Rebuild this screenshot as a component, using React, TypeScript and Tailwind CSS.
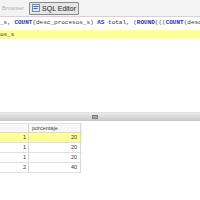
import React from 'react';

const ROWS = [
  { n: 1, p: 20 },
  { n: 1, p: 20 },
  { n: 1, p: 20 },
  { n: 2, p: 40 },
];

export default function App() {
  return (
    <div className="w-[200px] h-[200px] bg-white flex flex-col overflow-hidden font-['Liberation_Sans',sans-serif]">
      {/* Tabs */}
      <div className="h-[17px] shrink-0 bg-[#f3f3f3] border-b border-[#d4d4d4] flex items-center pl-[2px] gap-[5px]">
        <span className="text-[6px] text-[#b0b0b0]">Browser</span>
        <div className="h-[13px] px-[2px] flex items-center gap-[2px] border border-[#8a8a8a] bg-[#e6e6e6] rounded-[1px]">
          <svg width="8" height="8" viewBox="0 0 8 8">
            <rect x="0.5" y="0.5" width="7" height="7" fill="#dfe9f3" stroke="#6d8fb3" />
            <rect x="1.5" y="2" width="5" height="1" fill="#3b6ea5" />
            <rect x="1.5" y="4" width="4" height="1" fill="#3b6ea5" />
          </svg>
          <span className="text-[7px] text-[#222] leading-none">SQL Editor</span>
        </div>
      </div>

      {/* Editor */}
      <div className="h-[95px] shrink-0 overflow-hidden font-['Liberation_Mono',monospace] text-[6px] leading-[10px] text-[#333] whitespace-nowrap">
        <div className="h-[10px] mt-[1px] overflow-hidden">
          _s, <span className="text-[#3232b4] font-bold">COUNT</span>(desc_procesos_s) <span className="text-[#3232b4] font-bold">AS</span> total, (<span className="text-[#3232b4] font-bold">ROUND</span>(((<span className="text-[#3232b4] font-bold">COUNT</span>(desc
        </div>
        <div className="h-[9px] mt-[2px] bg-[#ffff99]">os_s</div>
      </div>

      {/* Splitter */}
      <div className="h-[9px] shrink-0 border-t border-[#e0e0e0] bg-gradient-to-b from-[#ececec] via-[#d8d8d8] to-[#c6c6c6] relative">
        <div className="absolute left-[92px] top-[2px] w-[6px] h-[4px] bg-[#a4a4a4] border border-[#808080]" />
      </div>

      {/* Results */}
      <div className="flex-1 pt-[2px] bg-white">
        <div className="w-[82px] border-t border-[#e2e2e2] text-[5.5px] text-[#333]">
          <div className="flex h-[9px] bg-[#f7f7f7] border-b border-[#d8d8d8]">
            <div className="w-[29px] border-r border-[#d8d8d8]" />
            <div className="w-[52px] pl-[3px] flex items-center text-[#444] border-r border-[#d8d8d8]">porcentaje</div>
          </div>
          {ROWS.map((r, i) => (
            <div
              key={i}
              className={`flex h-[10px] border-b border-[#e0e0e0] ${i === 0 ? 'bg-[#ffff99]' : 'bg-white'}`}
            >
              <div className="w-[29px] pr-[2px] flex items-center justify-end border-r border-[#d8d8d8]">{r.n}</div>
              <div className="w-[52px] pr-[3px] flex items-center justify-end border-r border-[#d8d8d8]">{r.p}</div>
            </div>
          ))}
        </div>
      </div>
    </div>
  );
}
